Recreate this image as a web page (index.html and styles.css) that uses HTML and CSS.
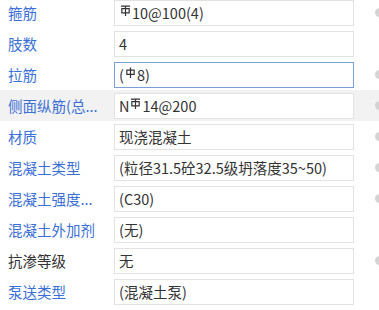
FILE: index.html
```html
<!DOCTYPE html>
<html lang="zh-CN">
<head>
    <meta charset="UTF-8">
    <title>属性</title>
    <link rel="stylesheet" href="styles.css">
</head>
<body>
    <div class="props">
        <div class="row">
            <span class="label">箍筋</span>
            <div class="field"><svg class="bar" viewBox="0 0 12 12"><path d="M1 1.2H11M6 0.5V12M2 4H10V8.5H2Z"/></svg>10@100(4)</div>
            <span class="dot"></span>
        </div>
        <div class="row">
            <span class="label">肢数</span>
            <div class="field">4</div>
            <span class="dot none"></span>
        </div>
        <div class="row">
            <span class="label">拉筋</span>
            <div class="field focus">(<svg class="bar" viewBox="0 0 12 12"><path d="M6 0.5V12M2 3.5H10V8H2Z"/></svg>8)</div>
            <span class="dot"></span>
        </div>
        <div class="row hover">
            <span class="label" title="侧面纵筋(总配筋值)">侧面纵筋(总...</span>
            <div class="field">N<svg class="bar" viewBox="0 0 12 12"><path d="M1 1.2H11M6 0.5V12M2 4H10V8.5H2Z"/></svg>14@200</div>
            <span class="dot"></span>
        </div>
        <div class="row">
            <span class="label">材质</span>
            <div class="field">现浇混凝土</div>
            <span class="dot"></span>
        </div>
        <div class="row">
            <span class="label">混凝土类型</span>
            <div class="field">(粒径31.5砼32.5级坍落度35~50)</div>
            <span class="dot"></span>
        </div>
        <div class="row">
            <span class="label" title="混凝土强度等级">混凝土强度...</span>
            <div class="field">(C30)</div>
            <span class="dot"></span>
        </div>
        <div class="row">
            <span class="label">混凝土外加剂</span>
            <div class="field">(无)</div>
            <span class="dot none"></span>
        </div>
        <div class="row">
            <span class="label plain">抗渗等级</span>
            <div class="field">无</div>
            <span class="dot"></span>
        </div>
        <div class="row">
            <span class="label">泵送类型</span>
            <div class="field">(混凝土泵)</div>
            <span class="dot none"></span>
        </div>
    </div>
</body>
</html>
```

FILE: styles.css
```css
* {
  box-sizing: border-box;
}
body {
  margin: 0;
  overflow: hidden;
  background: #fff;
  font-family: "Noto Sans CJK SC", "Microsoft YaHei", sans-serif;
  font-size: 14.5px;
}
.props {
  margin-top: -3px;
  width: 379px;
  overflow: hidden;
}
.row {
  display: flex;
  align-items: center;
  height: 31px;
}
.row.hover {
  background: #f2f2f2;
}
.label {
  flex: none;
  width: 114px;
  padding-left: 8px;
  color: #3a6fd6;
  white-space: nowrap;
}
.label.plain {
  color: #333;
}
.field {
  flex: none;
  width: 240px;
  height: 26px;
  padding: 0 4px;
  display: flex;
  align-items: center;
  background: #fff;
  border: 1px solid #e2e2e2;
  color: #333;
  white-space: nowrap;
}
.field.focus {
  border-color: #7b9fd8;
}
.bar {
  width: 11px;
  height: 11px;
  margin: 0 1px 4px 1px;
  fill: none;
  stroke: #333;
  stroke-width: 1.3;
}
.dot {
  flex: none;
  width: 9px;
  height: 9px;
  margin-left: 21px;
  border-radius: 50%;
  background: #d4d4d4;
}
.dot.none {
  visibility: hidden;
}
```
